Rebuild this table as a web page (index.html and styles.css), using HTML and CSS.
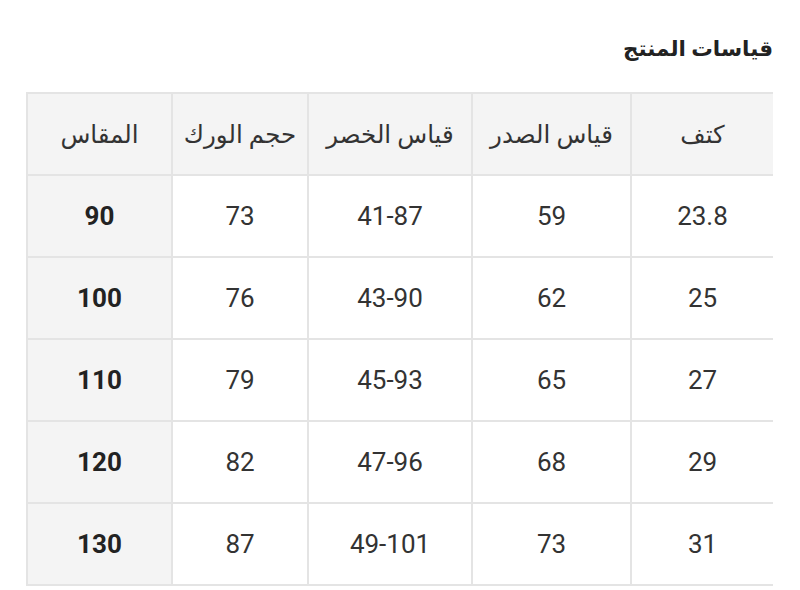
FILE: index.html
```html
<!DOCTYPE html>
<html lang="ar" dir="rtl">
<head>
<meta charset="utf-8">
<link rel="stylesheet" href="styles.css">
</head>
<body>
<div class="wrap">
  <h2 class="title">قياسات المنتج</h2>
  <table class="sizes">
    <colgroup>
      <col class="c1"><col class="c2"><col class="c3"><col class="c4"><col class="c5">
    </colgroup>
    <thead>
      <tr><th>كتف</th><th>قياس الصدر</th><th>قياس الخصر</th><th>حجم الورك</th><th>المقاس</th></tr>
    </thead>
    <tbody>
      <tr><td>23.8</td><td>59</td><td>41-87</td><td>73</td><td class="size">90</td></tr>
      <tr><td>25</td><td>62</td><td>43-90</td><td>76</td><td class="size">100</td></tr>
      <tr><td>27</td><td>65</td><td>45-93</td><td>79</td><td class="size">110</td></tr>
      <tr><td>29</td><td>68</td><td>47-96</td><td>82</td><td class="size">120</td></tr>
      <tr><td>31</td><td>73</td><td>49-101</td><td>87</td><td class="size">130</td></tr>
    </tbody>
  </table>
</div>
</body>
</html>
```
FILE: styles.css
```css
html, body {
  margin: 0;
  padding: 0;
  background: #ffffff;
}
body {
  font-family: Roboto, "DejaVu Sans", sans-serif;
  color: #333333;
}
.wrap {
  width: 746px;
  margin-right: 27px;
  padding-top: 33px;
}
.title {
  margin: 0 0 27px 0;
  font-size: 21.5px;
  line-height: 32px;
  font-weight: bold;
  color: #222222;
}
.sizes {
  width: 746px;
  border-collapse: collapse;
  table-layout: fixed;
}
.c1 { width: 142px; }
.c2 { width: 159px; }
.c3 { width: 164px; }
.c4 { width: 136px; }
.c5 { width: 145px; }
.sizes th, .sizes td {
  border: 2px solid #e4e4e4;
  height: 80px;
  padding: 0;
  text-align: center;
  vertical-align: middle;
  font-size: 26px;
  color: #333333;
}
.sizes tr > :first-child {
  border-right: none;
}
.sizes th {
  background: #f4f4f4;
  font-weight: normal;
  font-size: 24.5px;
}
.sizes td.size {
  background: #f4f4f4;
  font-weight: bold;
  color: #222222;
}
```
